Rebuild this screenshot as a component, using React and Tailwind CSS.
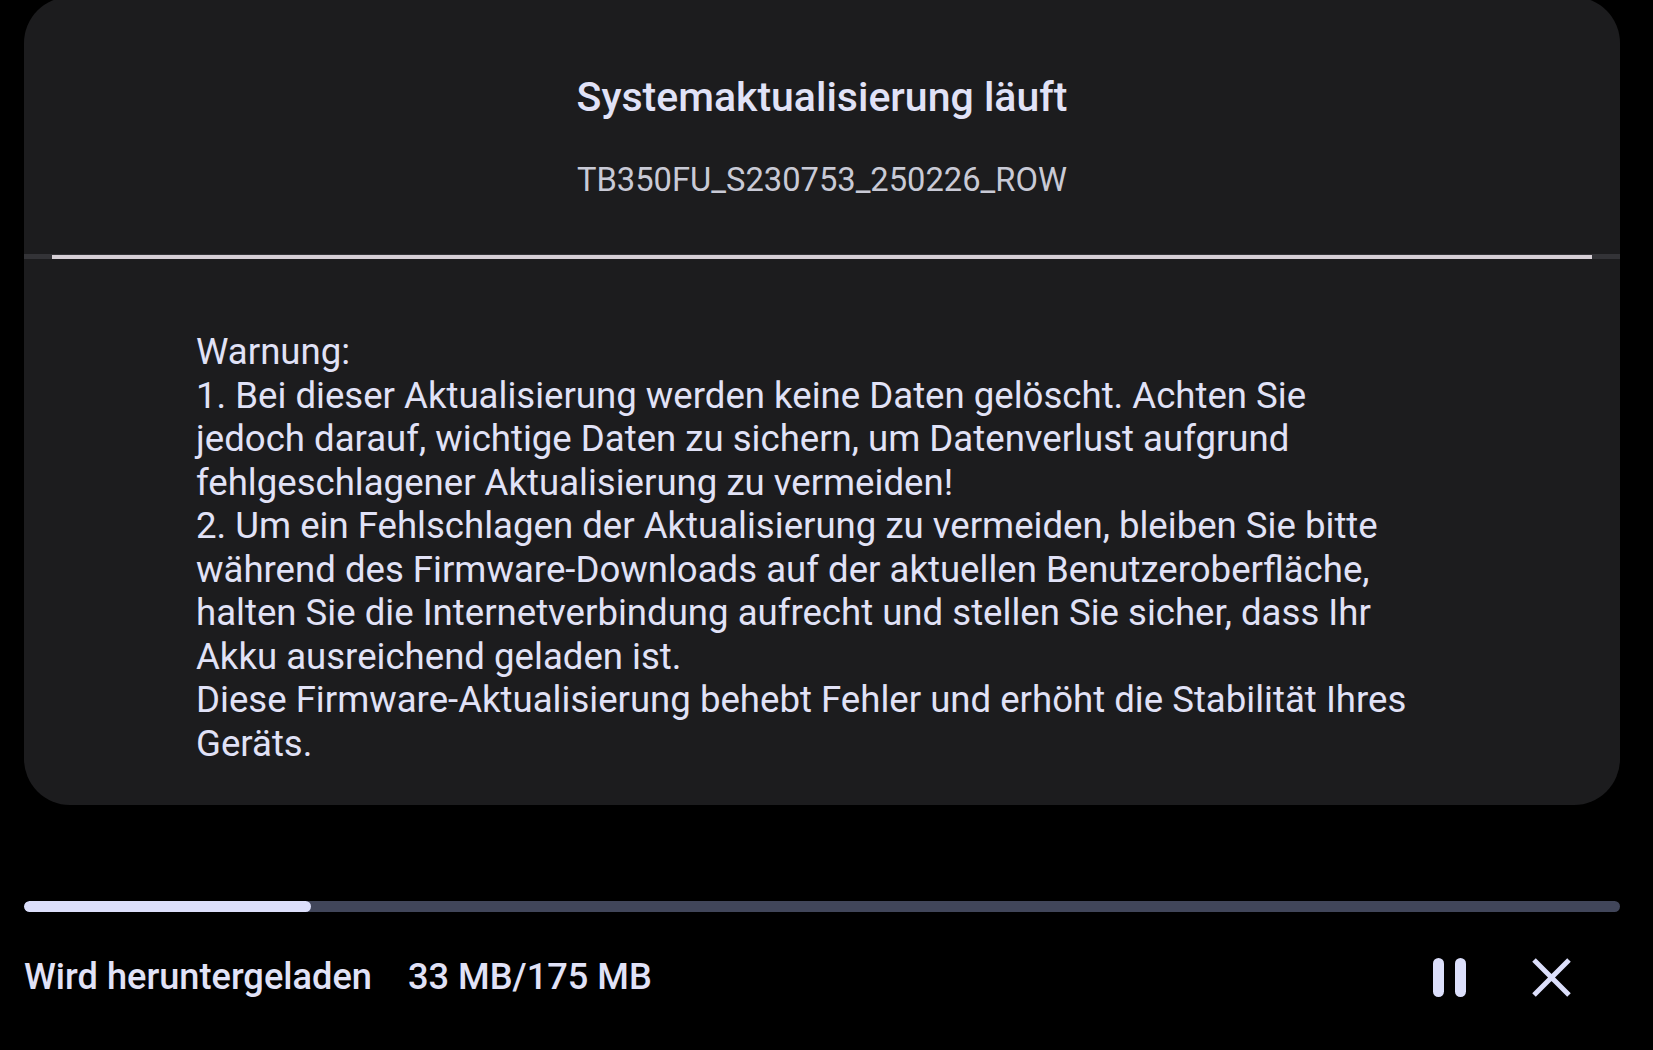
import React from "react";

const lines = [
  "Warnung:",
  "1. Bei dieser Aktualisierung werden keine Daten gelöscht. Achten Sie",
  "jedoch darauf, wichtige Daten zu sichern, um Datenverlust aufgrund",
  "fehlgeschlagener Aktualisierung zu vermeiden!",
  "2. Um ein Fehlschlagen der Aktualisierung zu vermeiden, bleiben Sie bitte",
  "während des Firmware-Downloads auf der aktuellen Benutzeroberfläche,",
  "halten Sie die Internetverbindung aufrecht und stellen Sie sicher, dass Ihr",
  "Akku ausreichend geladen ist.",
  "Diese Firmware-Aktualisierung behebt Fehler und erhöht die Stabilität Ihres",
  "Geräts.",
];

export default function App() {
  return (
    <div
      className="w-[1653px] h-[1050px] bg-black overflow-hidden text-[#e1e2f7]"
      style={{ fontFamily: "Roboto, 'Noto Sans', sans-serif" }}
    >
      <div className="ml-[24px] mt-[-3px] w-[1596px] bg-[#1c1c1e] rounded-[46px] pt-[78px] pb-[40px]">
        <div className="text-center text-[41px] leading-[44px] font-medium">
          Systemaktualisierung läuft
        </div>
        <div className="mt-[41px] text-center text-[32.7px] leading-[40px] text-[#c9cad6]">
          TB350FU_S230753_250226_ROW
        </div>
        <div className="mt-[54px] h-[5px] bg-[#333337] flex items-center">
          <div className="ml-[28px] w-[1540px] h-[4px] bg-[#d6cfd6]" />
        </div>
        <div className="mt-[71px] pl-[172px] text-[36.6px] leading-[43.5px]">
          {lines.map((l, i) => (
            <div key={i} className="whitespace-nowrap">
              {l}
            </div>
          ))}
        </div>
      </div>

      <div className="mt-[96px] ml-[24px] w-[1596px] h-[11px] rounded-full bg-[#41465a] overflow-hidden">
        <div className="h-full w-[287px] rounded-full bg-[#dcdffb]" />
      </div>

      <div className="mt-[41px] ml-[24px] mr-[82px] h-[48px] flex items-center justify-between">
        <div className="flex items-center text-[36.2px] font-medium leading-[48px]">
          <span>Wird heruntergeladen</span>
          <span className="ml-[36px]">33 MB/175 MB</span>
        </div>
        <div className="flex items-center">
          <div className="flex gap-[11px]">
            <div className="w-[11px] h-[39px] rounded-full bg-[#dcdffb]" />
            <div className="w-[11px] h-[39px] rounded-full bg-[#dcdffb]" />
          </div>
          <svg
            className="ml-[66px]"
            width="39"
            height="39"
            viewBox="0 0 39 39"
          >
            <path
              d="M2 2 L37 37 M37 2 L2 37"
              stroke="#dcdffb"
              strokeWidth="5"
              strokeLinecap="butt"
              fill="none"
            />
          </svg>
        </div>
      </div>
    </div>
  );
}
